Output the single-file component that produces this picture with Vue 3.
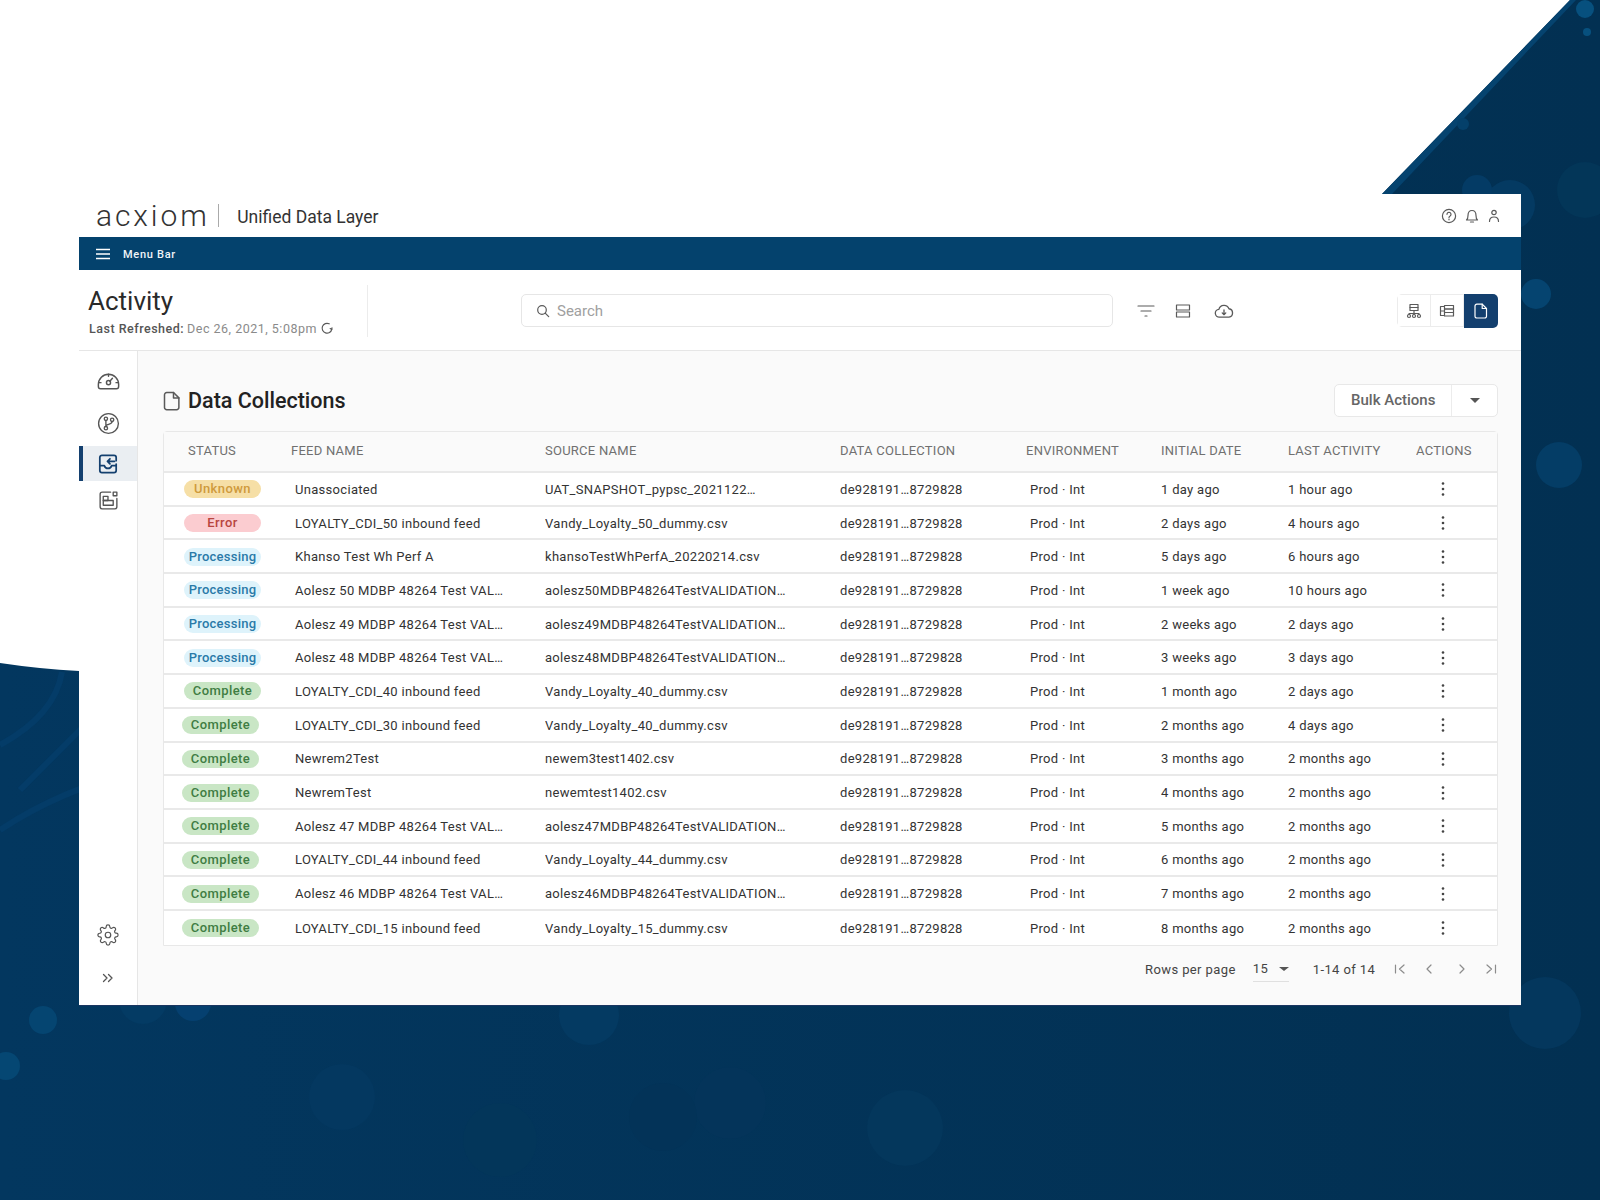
<template>
  <div class="page">
    <svg class="backdrop" width="1600" height="1200" viewBox="0 0 1600 1200">
      <defs>
        <linearGradient id="bg" x1="0" y1="0" x2="1" y2="0">
          <stop offset="0" stop-color="#03375f" />
          <stop offset="1" stop-color="#023052" />
        </linearGradient>
      </defs>
      <rect width="1600" height="1200" fill="url(#bg)" />
      <path d="M0 0H1570L1382 194V671H79Q40 669 0 663Z" fill="#fff" />
      <path d="M1570 0H1576L1392 194H1382Z" fill="#05436f" />
      <path d="M0 745Q55 715 62 672M0 830Q60 790 140 770M20 790L120 690" stroke="#043c68" stroke-width="6" fill="none" />
      <circle
        v-for="(b, i) in bubbles"
        :key="i"
        :cx="b[0]"
        :cy="b[1]"
        :r="b[2]"
        :fill="b[3]"
      />
    </svg>

    <div class="card">
      <header class="top">
        <span class="logo">acxiom</span>
        <span class="logo-sep"></span>
        <span class="product">Unified Data Layer</span>
        <div class="top-icons">
          <svg width="16" height="16" viewBox="0 0 16 16" class="ico">
            <circle cx="8" cy="8" r="6.6" />
            <path d="M6 6.3a2 2 0 1 1 3.1 1.7c-.8.5-1.1.9-1.1 1.6" />
            <path d="M8 11.2v.6" />
          </svg>
          <svg width="16" height="16" viewBox="0 0 16 16" class="ico">
            <path d="M2.500 12c1.200-1 1.500-2 1.500-4.500C4 4.500 5.700 2.500 8 2.500s4 2 4 5c0 2.500.3 3.500 1.500 4.500z" />
            <path d="M6.500 14h3" />
          </svg>
          <svg width="14" height="16" viewBox="0 0 14 16" class="ico">
            <circle cx="7" cy="4.500" r="2.200" />
            <path d="M2.500 13.500c0-3 2-4.500 4.500-4.500s4.500 1.500 4.500 4.500" />
          </svg>
        </div>
      </header>

      <div class="menubar">
        <svg width="16" height="12" viewBox="0 0 16 12">
          <path d="M1 1.500h14M1 6h14M1 10.500h14" stroke="#fff" stroke-width="1.500" />
        </svg>
        <span>Menu Bar</span>
      </div>

      <div class="toolbar">
        <div class="heading">
          <h1>Activity</h1>
          <div class="refreshed">
            <b>Last Refreshed:</b>
            <span>Dec 26, 2021, 5:08pm</span>
            <svg width="14" height="14" viewBox="0 0 14 14" class="ico">
              <path d="M11.800 8.300A4.900 4.900 0 1 1 9.200 2.800" />
              <path d="M12 6.800l-.3 1.700-1.500-.9" />
            </svg>
          </div>
        </div>

        <div class="search">
          <svg width="14" height="14" viewBox="0 0 14 14" class="ico">
            <circle cx="6" cy="6" r="4.300" />
            <path d="M9.200 9.200l3.500 3.500" />
          </svg>
          <span>Search</span>
        </div>

        <div class="tools">
          <svg width="18" height="14" viewBox="0 0 18 14" class="ico thin">
            <path d="M1 2h16M4 7h10M8 12h2" />
          </svg>
          <svg width="16" height="14" viewBox="0 0 16 14" class="ico tool-rows">
            <rect x="1.500" y="1" width="13" height="5" />
            <rect x="1.500" y="8" width="13" height="5" />
          </svg>
          <svg width="20" height="16" viewBox="0 0 18 14" class="ico tool-cloud">
            <path d="M5 12.500a3.500 3.500 0 0 1-.6-7A4.800 4.800 0 0 1 13.500 5a3.800 3.800 0 0 1 0 7.500z" />
            <path d="M9 6v4M7.400 8.700L9 10.300l1.600-1.600" />
          </svg>
        </div>

        <div class="views">
          <button class="view">
            <svg width="16" height="16" viewBox="0 0 16 16" class="ico">
              <rect x="4" y="1.500" width="8" height="3" />
              <rect x="4" y="4.500" width="8" height="3" />
              <path d="M8 7.500v3M3 11.500v-1h10v1M8 10.500v1" />
              <circle cx="3" cy="13" r="1.500" />
              <circle cx="8" cy="13" r="1.500" />
              <circle cx="13" cy="13" r="1.500" />
            </svg>
          </button>
          <button class="view">
            <svg width="16" height="16" viewBox="0 0 16 16" class="ico">
              <rect x="5.500" y="2.500" width="9" height="3.500" />
              <rect x="5.500" y="6" width="9" height="3.500" />
              <rect x="5.500" y="9.500" width="9" height="3.500" />
              <path d="M5 3.500H1.500v9H5M1.500 8H5" />
            </svg>
          </button>
          <button class="view view--active">
            <svg width="14" height="16" viewBox="0 0 14 16" class="ico ico--white">
              <path d="M2.800 1.200h5.400l4.300 4.300v7.700a1.800 1.800 0 0 1-1.800 1.800H2.800A1.800 1.800 0 0 1 1 13.200V3a1.800 1.800 0 0 1 1.800-1.800z" />
              <path d="M8.200 1.200v4.300h4.300" />
            </svg>
          </button>
        </div>
      </div>

      <div class="body">
        <aside class="side">
          <div class="side-item">
            <svg width="27" height="27" viewBox="0 0 24 24" class="ico ico--side">
              <path d="M5 18.500h14a2 2 0 0 0 2-2v-2a9 9 0 0 0-18 0v2a2 2 0 0 0 2 2z" />
              <circle cx="12" cy="13" r="1.800" />
              <path d="M13.200 11.700l2.300-2.500M12 5.500v1.800M3.500 13h1.800M18.700 13h1.800" />
            </svg>
          </div>
          <div class="side-item">
            <svg width="25" height="25" viewBox="0 0 24 24" class="ico ico--side">
              <circle cx="12" cy="12" r="9.500" />
              <circle cx="9.500" cy="7.500" r="1.600" />
              <circle cx="9.500" cy="16.500" r="1.600" />
              <circle cx="15.500" cy="8.500" r="1.600" />
              <path d="M9.500 9.100v5.800M15.500 10.100c0 2.400-3 2.400-6 3.900" />
            </svg>
          </div>
          <div class="side-item side-item--active">
            <svg width="24" height="24" viewBox="0 0 22 22" class="ico ico--navy">
              <path d="M18.500 8V5a2 2 0 0 0-2-2h-11a2 2 0 0 0-2 2v12a2 2 0 0 0 2 2h11a2 2 0 0 0 2-2v-6" />
              <path d="M3.500 12.500h4.200c.6 2 1.800 2.500 3.300 2.500s2.700-.5 3.300-2.500h4.200" />
              <path d="M17 8.500h-6.500M12.800 6.200l-2.300 2.300 2.300 2.300" />
            </svg>
          </div>
          <div class="side-item">
            <svg width="23" height="23" viewBox="0 0 22 22" class="ico ico--side">
              <path d="M19 9v8a2 2 0 0 1-2 2H5a2 2 0 0 1-2-2V5a2 2 0 0 1 2-2h8" />
              <rect x="6" y="7" width="4.500" height="4" />
              <rect x="6" y="11" width="9.500" height="4.500" />
              <rect x="15.500" y="3" width="3.500" height="3.500" />
            </svg>
          </div>
          <div class="side-spacer"></div>
          <div class="side-item side-item--gear">
            <svg width="22" height="22" viewBox="0 0 24 24" class="ico ico--side">
              <circle cx="12" cy="12" r="3" />
              <path d="M19.400 15a1.650 1.650 0 0 0 .33 1.820l.06.06a2 2 0 0 1 0 2.830 2 2 0 0 1-2.830 0l-.06-.06a1.650 1.650 0 0 0-1.820-.33 1.650 1.650 0 0 0-1 1.510V21a2 2 0 0 1-2 2 2 2 0 0 1-2-2v-.09A1.650 1.650 0 0 0 9 19.400a1.650 1.650 0 0 0-1.820.33l-.06.06a2 2 0 0 1-2.830 0 2 2 0 0 1 0-2.830l.06-.06a1.650 1.650 0 0 0 .33-1.820 1.650 1.650 0 0 0-1.510-1H3a2 2 0 0 1-2-2 2 2 0 0 1 2-2h.09A1.650 1.650 0 0 0 4.600 9a1.650 1.650 0 0 0-.33-1.820l-.06-.06a2 2 0 0 1 0-2.830 2 2 0 0 1 2.830 0l.06.06a1.650 1.650 0 0 0 1.820.33H9a1.650 1.650 0 0 0 1-1.510V3a2 2 0 0 1 2-2 2 2 0 0 1 2 2v.09a1.650 1.650 0 0 0 1 1.510 1.650 1.650 0 0 0 1.820-.33l.06-.06a2 2 0 0 1 2.830 0 2 2 0 0 1 0 2.830l-.06.06a1.650 1.650 0 0 0-.33 1.820V9a1.650 1.650 0 0 0 1.510 1H21a2 2 0 0 1 2 2 2 2 0 0 1-2 2h-.09a1.650 1.650 0 0 0-1.510 1z" />
            </svg>
          </div>
          <div class="side-expand">
            <svg width="12" height="10" viewBox="0 0 12 10" class="ico ico--side">
              <path d="M1.500 1.500L5 5 1.500 8.500M6.500 1.500L10 5 6.500 8.500" />
            </svg>
          </div>
        </aside>

        <main class="main">
          <div class="title-row">
            <svg width="18" height="20" viewBox="0 0 14 16" class="ico">
              <path d="M2.800 1.200h5.400l4.300 4.300v7.700a1.800 1.800 0 0 1-1.800 1.800H2.800A1.800 1.800 0 0 1 1 13.200V3a1.800 1.800 0 0 1 1.800-1.800z" />
              <path d="M8.200 1.200v4.300h4.300" />
            </svg>
            <h2>Data Collections</h2>
            <div class="bulk">
              <span class="bulk-label">Bulk Actions</span>
              <span class="bulk-caret"><i class="caret"></i></span>
            </div>
          </div>

          <div class="table">
            <div class="row row--head">
              <div class="cell cell--status">STATUS</div>
              <div class="cell">FEED NAME</div>
              <div class="cell">SOURCE NAME</div>
              <div class="cell">DATA COLLECTION</div>
              <div class="cell">ENVIRONMENT</div>
              <div class="cell">INITIAL DATE</div>
              <div class="cell">LAST ACTIVITY</div>
              <div class="cell">ACTIONS</div>
            </div>
            <div v-for="row in rows" :key="row.initial" class="row">
              <div class="cell">
                <span :class="['pill', 'pill--' + row.status.toLowerCase(), { 'pill--nudge': row.nudge }]">{{ row.status }}</span>
              </div>
              <div class="cell cell--in">{{ row.feed }}</div>
              <div class="cell">{{ row.source }}</div>
              <div class="cell">de928191…8729828</div>
              <div class="cell cell--in">Prod · Int</div>
              <div class="cell">{{ row.initial }}</div>
              <div class="cell">{{ row.last }}</div>
              <div class="cell cell--kebab">
                <svg width="4" height="16" viewBox="0 0 4 16">
                  <circle cx="2" cy="2.500" r="1.300" fill="#444" />
                  <circle cx="2" cy="8" r="1.300" fill="#444" />
                  <circle cx="2" cy="13.500" r="1.300" fill="#444" />
                </svg>
              </div>
            </div>
          </div>

          <div class="pager">
            <span>Rows per page</span>
            <span class="per-page">15<i class="caret caret--small"></i></span>
            <span class="range">1-14 of 14</span>
            <svg width="12" height="10" viewBox="0 0 12 10" class="ico ico--pale">
              <path d="M1.500 1v8M10 1L5.500 5 10 9" />
            </svg>
            <svg width="12" height="10" viewBox="0 0 12 10" class="ico ico--pale page-prev">
              <path d="M8 1L4 5l4 4" />
            </svg>
            <svg width="12" height="10" viewBox="0 0 12 10" class="ico ico--pale">
              <path d="M4 1l4 4-4 4" />
            </svg>
            <svg width="12" height="10" viewBox="0 0 12 10" class="ico ico--pale">
              <path d="M2 1l4.500 4L2 9M10.500 1v8" />
            </svg>
          </div>
        </main>
      </div>
    </div>
  </div>
</template>

<script setup>
const bubbles = [
  [43, 1020, 14, '#054571'],
  [6, 1066, 14, '#054773'],
  [143, 1000, 24, '#043b64'],
  [193, 1003, 18, '#054070'],
  [589, 1015, 30, '#043a62'],
  [342, 1097, 33, '#043860'],
  [500, 1140, 37, '#03365a'],
  [730, 1103, 36, '#04345a'],
  [663, 1117, 34, '#033358'],
  [905, 1128, 38, '#04375c'],
  [1545, 1013, 36, '#04375d'],
  [1536, 294, 15, '#054470'],
  [1559, 465, 23, '#043d66'],
  [1585, 190, 28, '#033658'],
  [1510, 205, 25, '#043a62'],
  [1585, 9, 9, '#07507e'],
  [1587, 32, 4, '#07507e'],
  [1463, 124, 6, '#04406a'],
  [1477, 190, 15, '#043b65'],
]

const rows = [
  { status: 'Unknown', feed: 'Unassociated', source: 'UAT_SNAPSHOT_pypsc_2021122…', initial: '1 day ago', last: '1 hour ago' },
  { status: 'Error', feed: 'LOYALTY_CDI_50 inbound feed', source: 'Vandy_Loyalty_50_dummy.csv', initial: '2 days ago', last: '4 hours ago' },
  { status: 'Processing', feed: 'Khanso Test Wh Perf A', source: 'khansoTestWhPerfA_20220214.csv', initial: '5 days ago', last: '6 hours ago' },
  { status: 'Processing', feed: 'Aolesz 50 MDBP 48264 Test VAL…', source: 'aolesz50MDBP48264TestVALIDATION…', initial: '1 week ago', last: '10 hours ago' },
  { status: 'Processing', feed: 'Aolesz 49 MDBP 48264 Test VAL…', source: 'aolesz49MDBP48264TestVALIDATION…', initial: '2 weeks ago', last: '2 days ago' },
  { status: 'Processing', feed: 'Aolesz 48 MDBP 48264 Test VAL…', source: 'aolesz48MDBP48264TestVALIDATION…', initial: '3 weeks ago', last: '3 days ago' },
  { status: 'Complete', nudge: true, feed: 'LOYALTY_CDI_40 inbound feed', source: 'Vandy_Loyalty_40_dummy.csv', initial: '1 month ago', last: '2 days ago' },
  { status: 'Complete', feed: 'LOYALTY_CDI_30 inbound feed', source: 'Vandy_Loyalty_40_dummy.csv', initial: '2 months ago', last: '4 days ago' },
  { status: 'Complete', feed: 'Newrem2Test', source: 'newem3test1402.csv', initial: '3 months ago', last: '2 months ago' },
  { status: 'Complete', feed: 'NewremTest', source: 'newemtest1402.csv', initial: '4 months ago', last: '2 months ago' },
  { status: 'Complete', feed: 'Aolesz 47 MDBP 48264 Test VAL…', source: 'aolesz47MDBP48264TestVALIDATION…', initial: '5 months ago', last: '2 months ago' },
  { status: 'Complete', feed: 'LOYALTY_CDI_44 inbound feed', source: 'Vandy_Loyalty_44_dummy.csv', initial: '6 months ago', last: '2 months ago' },
  { status: 'Complete', feed: 'Aolesz 46 MDBP 48264 Test VAL…', source: 'aolesz46MDBP48264TestVALIDATION…', initial: '7 months ago', last: '2 months ago' },
  { status: 'Complete', feed: 'LOYALTY_CDI_15 inbound feed', source: 'Vandy_Loyalty_15_dummy.csv', initial: '8 months ago', last: '2 months ago' },
]
</script>

<style scoped>
.page {
  position: relative;
  width: 1600px;
  height: 1200px;
  overflow: hidden;
  padding: 194px 0 0 79px;
  box-sizing: border-box;
  font-family: Roboto, "Liberation Sans", sans-serif;
  color: #333;
}

.backdrop {
  position: absolute;
  left: 0;
  top: 0;
}

.card {
  position: relative;
  width: 1442px;
  height: 811px;
  display: flex;
  flex-direction: column;
  background: #fff;
  box-shadow: 0 1px 0 #1a3560;
}

.ico {
  fill: none;
  stroke: #5a5a5a;
  stroke-width: 1.2;
  stroke-linecap: round;
  stroke-linejoin: round;
  flex: none;
}

.ico--white {
  stroke: #fff;
}

.ico--side {
  stroke: #555;
  stroke-width: 1.3;
}

.ico--navy {
  stroke: #14406f;
  stroke-width: 1.6;
}

.ico--pale {
  stroke: #8c8c8c;
}

/* top bar */
.top {
  height: 43px;
  display: flex;
  align-items: center;
  padding: 0 20px 0 17px;
  flex: none;
}

.logo {
  font-weight: 300;
  font-size: 30px;
  letter-spacing: 2.900px;
  color: #333;
}

.logo-sep {
  width: 1.500px;
  height: 23px;
  background: #aaa;
  margin: 0 18px 0 8px;
}

.product {
  margin-top: 2px;
  font-size: 17.500px;
  color: #333;
}

.top-icons {
  margin-left: auto;
  display: flex;
  gap: 7px;
  align-items: center;
}

.menubar {
  height: 33px;
  flex: none;
  display: flex;
  align-items: center;
  gap: 12px;
  box-sizing: border-box;
  padding: 1px 0 0 16px;
  background: #04426d;
  color: #f0f4f8;
  font-size: 11px;
  font-weight: 500;
  letter-spacing: 0.700px;
}

/* toolbar */
.toolbar {
  height: 81px;
  flex: none;
  display: flex;
  align-items: center;
  box-sizing: border-box;
  border-bottom: 1.500px solid #e6e6e6;
  padding: 1px 24px 0 0;
}

.heading {
  width: 289px;
  height: 52px;
  box-sizing: border-box;
  padding-left: 9px;
  border-right: 1.500px solid #ececec;
  flex: none;
}

h1 {
  margin: 1px 0 0;
  font-size: 26px;
  line-height: 30px;
  font-weight: 400;
  color: #2a2a2a;
}

.refreshed {
  display: flex;
  align-items: center;
  gap: 3px;
  margin-top: 5px;
  padding-left: 1px;
  font-size: 12.500px;
  letter-spacing: 0.500px;
  color: #8a8a8a;
}

.refreshed b {
  font-weight: 500;
  color: #555;
}

.search {
  width: 592px;
  height: 33px;
  margin-left: 153px;
  box-sizing: border-box;
  border: 1.500px solid #e6e6e6;
  border-radius: 5px;
  display: flex;
  align-items: center;
  gap: 7px;
  padding-left: 14px;
  font-size: 15px;
  color: #a0a0a0;
  flex: none;
}

.tools {
  display: flex;
  align-items: center;
  gap: 21px;
  margin-left: 24px;
}

.tool-rows {
  margin-left: -1px;
}

.tool-cloud {
  margin-left: 2px;
}

.views {
  margin-left: auto;
  display: flex;
  height: 33px;
  box-sizing: border-box;
  border: 1.500px solid #ececec;
  border-radius: 5px;
}

.view {
  width: 33px;
  padding: 0;
  display: flex;
  align-items: center;
  justify-content: center;
  background: #fff;
  border: 0;
  border-right: 1.500px solid #ececec;
}

.view--active {
  width: 34px;
  margin: -1.500px -1.500px -1.500px 0;
  background: #133f6e;
  border: 0;
  border-radius: 0 5px 5px 0;
}

/* body */
.body {
  flex: 1;
  display: flex;
  min-height: 0;
}

.side {
  width: 59px;
  box-sizing: border-box;
  border-right: 1.500px solid #e6e6e6;
  padding: 11px 0 15px;
  display: flex;
  flex-direction: column;
  flex: none;
}

.side-item {
  height: 38px;
  display: flex;
  align-items: center;
  justify-content: center;
  margin-bottom: 4px;
}

.side-item--active {
  background: #eaeef2;
  box-shadow: inset 4px 0 0 #14406f;
  height: 35px;
  margin-bottom: 0;
}

.side-item--gear {
  margin-bottom: 12px;
}

.side-spacer {
  flex: 1;
}

.side-expand {
  height: 24px;
  display: flex;
  align-items: center;
  justify-content: center;
}

.main {
  flex: 1;
  background: #fafafa;
  box-sizing: border-box;
  padding: 33px 23px 0 25px;
  min-width: 0;
}

.title-row {
  display: flex;
  align-items: center;
  height: 33px;
  margin-bottom: 14px;
}

h2 {
  margin: 0 0 0 7px;
  font-size: 21.500px;
  font-weight: 500;
  color: #222;
}

.bulk {
  margin-left: auto;
  width: 164px;
  height: 33px;
  box-sizing: border-box;
  display: flex;
  background: #fff;
  border: 1.500px solid #e8e8e8;
  border-radius: 5px;
  font-size: 15px;
  font-weight: 500;
  color: #666;
}

.bulk-label {
  width: 117px;
  box-sizing: border-box;
  padding-left: 16px;
  line-height: 30px;
  border-right: 1.500px solid #ececec;
}

.bulk-caret {
  flex: 1;
  display: flex;
  align-items: center;
  justify-content: center;
}

.caret {
  width: 0;
  height: 0;
  border-left: 5px solid transparent;
  border-right: 5px solid transparent;
  border-top: 5px solid #555;
}

.caret--small {
  margin: 2px 0 0 11px;
  border-top-width: 4.500px;
}

/* table */
.table {
  border: 1.500px solid #e8e8e8;
  border-radius: 4px 4px 0 0;
  box-sizing: border-box;
  font-size: 13px;
  letter-spacing: 0.300px;
  color: #333;
}

.row {
  height: 33.700px;
  box-sizing: border-box;
  display: grid;
  grid-template-columns: 127px 254px 295px 186px 135px 127px 128px 80px;
  align-items: center;
  padding-top: 1px;
  background: #fff;
  border-bottom: 2px solid #e9e9e9;
}

.row:last-child {
  border-bottom: 0;
}

.row--head {
  height: 41px;
  padding: 0 0 2px;
  background: #fafafa;
  color: #707070;
  border-bottom-width: 2.500px;
  letter-spacing: 0.250px;
}

.cell {
  white-space: nowrap;
  overflow: hidden;
}

.row--head .cell--status {
  padding-left: 24px;
}

.cell--in {
  padding-left: 4px;
}

.cell--kebab {
  padding-left: 25px;
  display: flex;
}

.pill {
  display: block;
  width: 77px;
  margin-left: 20px;
  height: 18px;
  line-height: 18px;
  border-radius: 9px;
  text-align: center;
  font-weight: 500;
  letter-spacing: 0.400px;
}

.pill--unknown {
  background: #f6dfa6;
  color: #cf9a3c;
}

.pill--error {
  background: #fbccd0;
  color: #b8453f;
}

.pill--processing {
  background: #def3fb;
  color: #2a7aa8;
  letter-spacing: 0.250px;
}

.pill--complete {
  margin-left: 18px;
  background: #c9e6c5;
  color: #3f7d43;
}

.pill--nudge {
  margin-left: 20px;
}

.pager {
  display: flex;
  align-items: center;
  height: 47.500px;
  padding-left: 982px;
  font-size: 13px;
  letter-spacing: 0.400px;
  color: #444;
}

.per-page {
  display: flex;
  align-items: center;
  width: 36px;
  height: 26px;
  box-sizing: border-box;
  margin: 0 24px 0 17px;
  padding-bottom: 1px;
  border-bottom: 1.500px solid #e0e0e0;
}

.range {
  margin-right: 19px;
}

.pager .ico {
  margin-right: 17px;
}

.pager .page-prev {
  margin-right: 21px;
}

.pager .ico:last-child {
  margin-right: 0;
}
</style>

<style>
body {
  margin: 0;
}
</style>
